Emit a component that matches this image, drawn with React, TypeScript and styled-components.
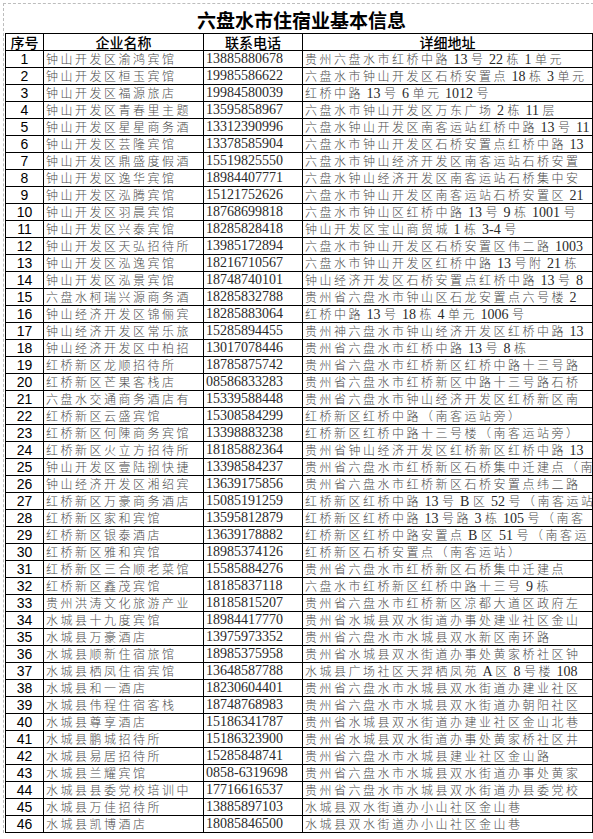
import React from "react";
import styled, { createGlobalStyle } from "styled-components";

type Row = [string, string, string];

const rows: Row[] = [
  ["钟山开发区渝鸿宾馆", "13885880678", "贵州六盘水市红桥中路 13 号 22 栋 1 单元"],
  ["钟山开发区桓玉宾馆", "19985586622", "六盘水市钟山开发区石桥安置点 18 栋 3 单元"],
  ["钟山开发区福源旅店", "19984580039", "红桥中路 13 号 6 单元 1012 号"],
  ["钟山开发区青春里主题", "13595858967", "六盘水市钟山开发区万东广场 2 栋 11 层"],
  ["钟山开发区星星商务酒", "13312390996", "六盘水钟山开发区南客运站红桥中路 13 号 11"],
  ["钟山开发区芸隆宾馆", "13378585904", "六盘水市钟山开发区石桥安置点红桥中路 13"],
  ["钟山开发区鼎盛度假酒", "15519825550", "六盘水市钟山经济开发区南客运站石桥安置"],
  ["钟山开发区逸华宾馆", "18984407771", "六盘水钟山经济开发区南客运站石桥集中安"],
  ["钟山开发区泓腾宾馆", "15121752626", "六盘水市钟山开发区南客运站石桥安置区 21"],
  ["钟山开发区羽晨宾馆", "18768699818", "六盘水市钟山区红桥中路 13 号 9 栋 1001 号"],
  ["钟山开发区兴泰宾馆", "18285828418", "钟山开发区宝山商贸城 1 栋 3-4 号"],
  ["钟山开发区天弘招待所", "13985172894", "六盘水市钟山开发区石桥安置区伟二路 1003"],
  ["钟山开发区泓逸宾馆", "18216710567", "六盘水市钟山开发区红桥中路 13 号附 21 栋"],
  ["钟山开发区泓景宾馆", "18748740101", "钟山经济开发区石桥安置点红桥中路 13 号 8"],
  ["六盘水柯瑞兴源商务酒", "18285832788", "贵州省六盘水市钟山区石龙安置点六号楼 2"],
  ["钟山经济开发区锦俪宾", "18285883064", "红桥中路 13 号 18 栋 4 单元 1006 号"],
  ["钟山经济开发区常乐旅", "15285894455", "贵州神六盘水市钟山经济开发区红桥中路 13"],
  ["钟山经济开发区中柏招", "13017078446", "贵州省六盘水市红桥中路 13 号 8 栋"],
  ["红桥新区龙顺招待所", "18785875742", "贵州省六盘水市红桥新区红桥中路十三号路"],
  ["红桥新区芒果客栈店", "08586833283", "贵州省六盘水市红桥新区中路十三号路石桥"],
  ["六盘水交通商务酒店有", "15339588448", "贵州省六盘水市钟山经济开发区红桥新区南"],
  ["红桥新区云盛宾馆", "15308584299", "红桥新区红桥中路（南客运站旁）"],
  ["红桥新区何陳商务宾馆", "13398883238", "红桥新区红桥中路十三号楼（南客运站旁）"],
  ["红桥新区火立方招待所", "18185882364", "贵州省钟山经济开发区红桥新区红桥中路 13"],
  ["钟山开发区壹陆捌快捷", "13398584237", "贵州省六盘水市红桥新区石桥集中迁建点（南"],
  ["钟山经济开发区湘绍宾", "13639175856", "贵州省六盘水市红桥新区石桥安置点纬二路"],
  ["红桥新区万豪商务酒店", "15085191259", "红桥新区红桥中路 13 号 B 区 52 号（南客运站"],
  ["红桥新区家和宾馆", "13595812879", "红桥新区红桥中路 13 号路 3 栋 105 号（南客"],
  ["红桥新区银泰酒店", "13639178882", "红桥新区红桥中路安置点 B 区 51 号（南客运"],
  ["红桥新区雅和宾馆", "18985374126", "红桥新区石桥安置点（南客运站）"],
  ["红桥新区三合顺老菜馆", "15585884276", "贵州省六盘水市红桥新区石桥集中迁建点"],
  ["红桥新区鑫茂宾馆", "18185837118", "六盘水市红桥新区红桥中路十三号 9 栋"],
  ["贵州洪涛文化旅游产业", "18185815207", "贵州省六盘水市红桥新区凉都大道区政府左"],
  ["水城县十九度宾馆", "18984417770", "贵州省水城县双水街道办事处建业社区金山"],
  ["水城县万豪酒店", "13975973352", "贵州省六盘水市水城县双水新区南环路"],
  ["水城县顺新住宿旅馆", "18985375958", "贵州省水城县双水街道办事处黄家桥社区钟"],
  ["水城县栖凤住宿宾馆", "13648587788", "水城县广场社区天羿栖凤苑 A 区 8 号楼 108"],
  ["水城县和一酒店", "18230604401", "贵州省六盘水市水城县双水街道办建业社区"],
  ["水城县伟程住宿客栈", "18748768983", "贵州省六盘水市水城县双水街道办朝阳社区"],
  ["水城县尊享酒店", "15186341787", "贵州省水城县双水街道办建业社区金山北巷"],
  ["水城县鹏城招待所", "15186323900", "贵州省水城县双水街道办事处黄家桥社区井"],
  ["水城县易居招待所", "15285848741", "贵州省六盘水市水城县建业社区金山路"],
  ["水城县兰耀宾馆", "0858-6319698", "贵州省六盘水市水城县双水街道办事处黄家"],
  ["水城县县委党校培训中", "17716616537", "贵州省六盘水市水城县双水街道办县委党校"],
  ["水城县万佳招待所", "13885897103", "水城县双水街道办小山社区金山巷"],
  ["水城县凯博酒店", "18085846500", "水城县双水街道办小山社区金山巷"],
];

const GlobalStyle = createGlobalStyle`
  body {
    margin: 0;
    background: #fff;
  }
`;

const Page = styled.div`
  margin: 3px 0 0 3px;
  padding-left: 1px;
  border-top: 1px dashed #bdbdbd;
  border-left: 1px dashed #bdbdbd;
  width: 589px;
`;

const Title = styled.div`
  height: 29px;
  line-height: 32px;
  text-align: center;
  font-family: "Noto Sans CJK SC", sans-serif;
  font-size: 19px;
  font-weight: 700;
  color: #000;
  padding-left: 4px;
`;

const Sheet = styled.table`
  border-collapse: collapse;
  table-layout: fixed;
  width: 587px;
`;

const Col = styled.col<{ $w: number }>`
  width: ${(p) => p.$w}px;
`;

const HeadCell = styled.th`
  padding: 0;
  height: 16px;
  line-height: 16px;
  border: 1px solid #000;
  font-family: "Noto Sans CJK SC", sans-serif;
  font-size: 14px;
  font-weight: 500;
  color: #000;
  text-align: center;
  white-space: nowrap;
`;

const Cell = styled.td<{ $kind: "no" | "name" | "tel" | "addr" }>`
  padding: 0 0 0 ${(p) => (p.$kind === "no" ? 0 : 2)}px;
  border: 1px solid #000;
  text-align: ${(p) => (p.$kind === "no" ? "center" : "left")};
  font-family: ${(p) =>
    p.$kind === "no"
      ? '"Liberation Sans", sans-serif'
      : p.$kind === "tel"
      ? '"Liberation Serif", serif'
      : '"Noto Sans CJK SC", sans-serif'};
  font-size: ${(p) => (p.$kind === "name" || p.$kind === "addr" ? 12 : 14)}px;
  font-weight: ${(p) => (p.$kind === "name" || p.$kind === "addr" ? 300 : 400)};
  letter-spacing: ${(p) => (p.$kind === "name" || p.$kind === "addr" ? 2.5 : 0)}px;
  color: ${(p) => (p.$kind === "no" ? "#000" : p.$kind === "tel" ? "#2a2a2a" : "#4d4d4d")};
`;

// fixed-height box so every row is 16px + 1px rule, like the sheet grid
const Fit = styled.div`
  height: 16px;
  line-height: 16px;
  white-space: nowrap;
  overflow: hidden;
`;

const Latin = styled.span`
  font-family: "Liberation Serif", serif;
  font-size: 14px;
  letter-spacing: 0;
  color: #2a2a2a;
`;

// digits and latin letters inside chinese text keep their own font and spacing
function mixed(text: string) {
  return text.split(/([\x20-\x7e]+)/).map((part, i) =>
    /^[\x20-\x7e]+$/.test(part) ? <Latin key={i}>{part}</Latin> : part
  );
}

export default function App() {
  return (
    <>
      <GlobalStyle />
      <Page>
        <Title>六盘水市住宿业基本信息</Title>
        <Sheet>
          <colgroup>
            <Col $w={38} />
            <Col $w={160} />
            <Col $w={99} />
            <Col $w={290} />
          </colgroup>
          <thead>
            <tr>
              <HeadCell>序号</HeadCell>
              <HeadCell>企业名称</HeadCell>
              <HeadCell>联系电话</HeadCell>
              <HeadCell>详细地址</HeadCell>
            </tr>
          </thead>
          <tbody>
            {rows.map(([name, tel, addr], i) => (
              <tr key={i}>
                <Cell $kind="no"><Fit>{i + 1}</Fit></Cell>
                <Cell $kind="name"><Fit>{name}</Fit></Cell>
                <Cell $kind="tel"><Fit>{tel}</Fit></Cell>
                <Cell $kind="addr"><Fit>{mixed(addr)}</Fit></Cell>
              </tr>
            ))}
          </tbody>
        </Sheet>
      </Page>
    </>
  );
}
